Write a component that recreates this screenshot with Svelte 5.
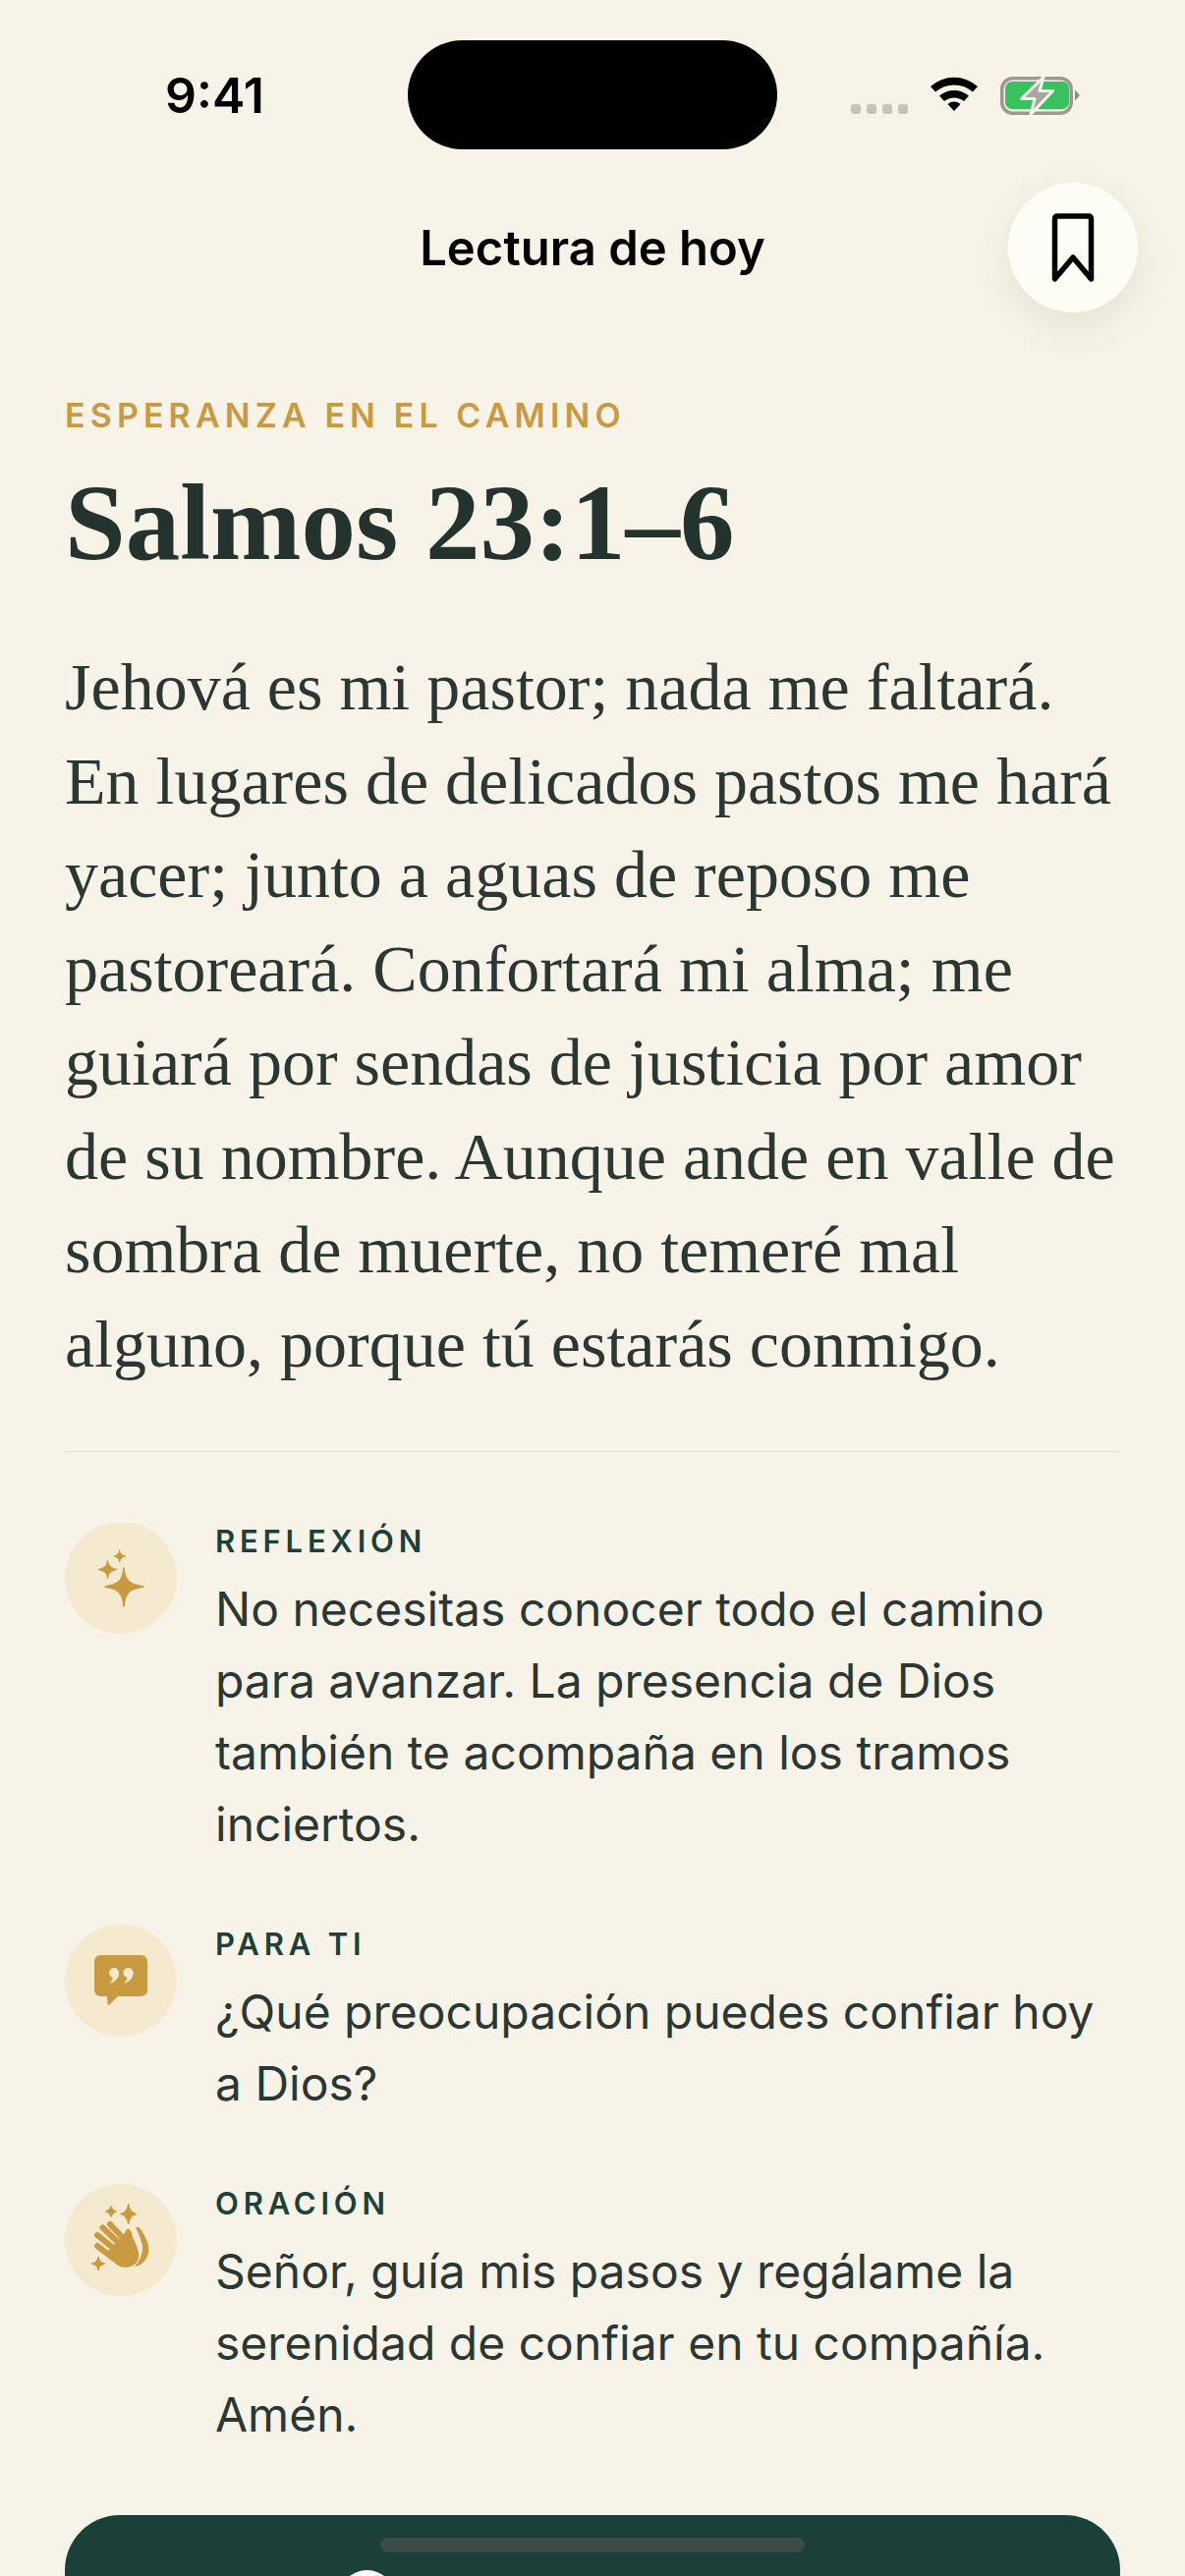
<script lang="ts">
  const verse = [
    "Jehová es mi pastor; nada me faltará.",
    "En lugares de delicados pastos me hará",
    "yacer; junto a aguas de reposo me",
    "pastoreará. Confortará mi alma; me",
    "guiará por sendas de justicia por amor",
    "de su nombre. Aunque ande en valle de",
    "sombra de muerte, no temeré mal",
    "alguno, porque tú estarás conmigo."
  ];

  const notes = [
    {
      key: "sparkle",
      label: "REFLEXIÓN",
      lines: [
        "No necesitas conocer todo el camino",
        "para avanzar. La presencia de Dios",
        "también te acompaña en los tramos",
        "inciertos."
      ]
    },
    {
      key: "quote",
      label: "PARA TI",
      lines: ["¿Qué preocupación puedes confiar hoy", "a Dios?"]
    },
    {
      key: "hands",
      label: "ORACIÓN",
      lines: [
        "Señor, guía mis pasos y regálame la",
        "serenidad de confiar en tu compañía.",
        "Amén."
      ]
    }
  ];
</script>

<div class="screen">
  <div class="status">
    <span class="time">9:41</span>
    <div class="island"></div>
    <div class="status-icons">
      <div class="signal"><i></i><i></i><i></i><i></i></div>
      <svg class="wifi" width="50" height="38" viewBox="0 0 50 38">
        <path d="M1 12 A36 36 0 0 1 49 12 L44 17.5 A29 29 0 0 0 6 17.5Z M10 21.5 A23 23 0 0 1 40 21.5 L35 27 A16 16 0 0 0 15 27Z M18.5 30 A10 10 0 0 1 31.500 30 L25 37Z" fill="#000"/>
      </svg>
      <svg class="battery" width="82" height="40" viewBox="0 0 82 40">
        <rect x="1.750" y="2.750" width="70.500" height="35.500" rx="11" fill="none" stroke="#9a9a92" stroke-width="3.500"/>
        <rect x="5" y="6" width="65" height="28" rx="7" fill="#37c25e"/>
        <path d="M76 14.500 L81 20 L76 25.500Z" fill="#8d8d86"/>
        <path d="M44 1.500 L21.500 23.500 H35 L31 39.500 L53.500 15.500 H40 Z" fill="#a7a69f" stroke="#f7f3e9" stroke-width="3" stroke-linejoin="round"/>
      </svg>
    </div>
  </div>

  <header class="nav">
    <h1>Lectura de hoy</h1>
    <button class="save" aria-label="Guardar">
      <svg width="44" height="72" viewBox="0 0 44 72">
        <path d="M3.500 68 V7 Q3.500 4 6.500 4 H37.500 Q40.500 4 40.500 7 V68 L22 46 Z" fill="none" stroke="#000" stroke-width="5.500" stroke-linejoin="round"/>
      </svg>
    </button>
  </header>

  <main>
    <p class="eyebrow">ESPERANZA EN EL CAMINO</p>
    <h2>Salmos 23:1–6</h2>
    <div class="verse">
      {#each verse as line}
        <div>{line}</div>
      {/each}
    </div>
    <hr />
    <div class="notes">
      {#each notes as note}
        <div class="note">
          <div class="badge">
            {#if note.key === "sparkle"}
              <svg width="114" height="114" viewBox="0 0 114 114">
                <path d="M60 47 C61 60 66 64 80 66 C66 68 61 72 60 86 C59 72 54 68 41 66 C54 64 59 60 60 47Z" fill="#c99a3f" stroke="#c99a3f" stroke-width="1.500" stroke-linejoin="round"/>
                <path d="M43.500 39 C44 45 47 47 53 48.500 C47 50 44 52 43.500 58 C43 52 40 50 34 48.500 C40 47 43 45 43.500 39Z" fill="#c99a3f" stroke="#c99a3f" stroke-linejoin="round"/>
                <path d="M55.700 28.500 C56 32 58 34 62 35 C58 36 56 38 55.700 41.500 C55.400 38 53.400 36 49.500 35 C53.400 34 55.400 32 55.700 28.500Z" fill="#c99a3f" stroke="#c99a3f" stroke-width="0.500" stroke-linejoin="round"/>
              </svg>
            {:else if note.key === "quote"}
              <svg width="114" height="114" viewBox="0 0 114 114">
                <path d="M37 31 H77 Q84 31 84 38 V66 Q84 73 77 73 H54 L46 81 Q44 83.500 43.500 80 L43 73 H37 Q30 73 30 66 V38 Q30 31 37 31Z" fill="#c99a3f"/>
                <circle cx="50" cy="49" r="5" fill="#f5e9cf"/>
                <path d="M55 48 Q56 56 46 60 Q49 56 49 53Z" fill="#f5e9cf"/>
                <circle cx="64.500" cy="49" r="5" fill="#f5e9cf"/>
                <path d="M69.500 48 Q70.500 56 60.500 60 Q63.500 56 63.500 53Z" fill="#f5e9cf"/>
              </svg>
            {:else}
              <svg width="114" height="114" viewBox="0 0 114 114">
                <path d="M64.700 20 Q66 29 73 30.500 Q66 32 64.700 41 Q63.500 32 56.500 30.500 Q63.500 29 64.700 20Z M47 22.500 Q48 27 52.500 28 Q48 29 47 33.500 Q46 29 41.500 28 Q46 27 47 22.500Z M34 74 Q35 80 41 81 Q35 82 34 88 Q33 82 27 81 Q33 80 34 74Z" fill="#c99a3f" stroke="#c99a3f" stroke-linejoin="round"/>
                <path d="M33 63 L50 76 M33 52 L53 68 M38.500 44.500 L57 62 M46 41 L62 58" fill="none" stroke="#c99a3f" stroke-width="6" stroke-linecap="round"/>
                <path d="M44 68 L58 54 L64 45 Q68 47 69 54 Q72 60 74 66 Q78 78 69 83 Q62 87 54 83 Q48 79 44 68Z" fill="#c99a3f"/>
                <path d="M72 44 Q76 43 79 49 Q90 66 82 77 Q78 83 71 84 Q80 74 79 63 Q77 53 72 44Z" fill="#c99a3f"/>
              </svg>
            {/if}
          </div>
          <div class="note-text">
            <div class="label">{note.label}</div>
            {#each note.lines as line}
              <div class="line">{line}</div>
            {/each}
          </div>
        </div>
      {/each}
    </div>
  </main>

  <div class="cta">
    <div class="home"></div>
    <span class="play"></span>
    <span class="cta-label">Escuchar el pasaje</span>
  </div>
</div>

<style>
  :global(body) {
    margin: 0;
    background: #f7f3e9;
  }

  .screen {
    position: relative;
    width: 1206px;
    height: 2622px;
    overflow: hidden;
    background: #f7f3e9;
    font-family: Inter, "Noto Sans", sans-serif;
    color: #25332f;
  }

  .status {
    position: relative;
    height: 186px;
    display: flex;
    justify-content: space-between;
    padding: 0 106px 0 168px;
    box-sizing: border-box;
  }

  .time {
    margin-top: 67px;
    font-size: 50px;
    line-height: 60px;
    font-weight: 600;
    color: #000;
  }

  .island {
    position: absolute;
    left: 415px;
    top: 41px;
    width: 376px;
    height: 111px;
    border-radius: 56px;
    background: #000;
  }

  .status-icons {
    display: flex;
    align-items: flex-start;
    margin-top: 78px;
    gap: 22px;
  }

  .signal {
    display: flex;
    gap: 6px;
    margin-top: 28px;
  }

  .signal i {
    width: 10px;
    height: 10px;
    border-radius: 3px;
    background: #c6c3ba;
  }

  .wifi {
    margin-top: -2px;
  }

  .battery {
    margin-top: -1px;
  }

  .nav {
    position: relative;
    height: 132px;
    display: flex;
    align-items: center;
    justify-content: center;
  }

  h1 {
    margin: 0;
    font-size: 49px;
    font-weight: 600;
    color: #000;
  }

  .save {
    position: absolute;
    right: 48px;
    top: 0;
    width: 132px;
    height: 132px;
    border: 0;
    border-radius: 50%;
    padding: 0;
    display: flex;
    align-items: center;
    justify-content: center;
    background: #fefdf5;
    box-shadow: 0 14px 40px rgba(90, 75, 40, 0.1);
  }

  main {
    padding: 84px 66px 0;
  }

  .eyebrow {
    margin: 0;
    font-size: 34px;
    line-height: 42px;
    font-weight: 600;
    letter-spacing: 5.100px;
    color: #c99a3f;
  }

  h2 {
    margin: 26px 0 0;
    font-family: "Liberation Serif", serif;
    font-size: 111px;
    line-height: 124px;
    font-weight: 700;
    color: #25332f;
  }

  .verse {
    margin-top: 58px;
    font-family: "Liberation Serif", serif;
    font-size: 68px;
    line-height: 95.500px;
    white-space: nowrap;
    color: #2b3733;
  }

  hr {
    margin: 61px 0 0;
    border: 0;
    border-top: 1px solid #e5e1d6;
  }

  .notes {
    margin-top: 71px;
    display: flex;
    flex-direction: column;
    gap: 66px;
  }

  .note {
    display: flex;
    gap: 39px;
  }

  .badge {
    flex: none;
    width: 114px;
    height: 114px;
    border-radius: 50%;
    background: #f5e9cf;
  }

  .label {
    margin: 2px 0 14px;
    font-size: 31px;
    line-height: 36px;
    font-weight: 600;
    letter-spacing: 4.800px;
    color: #1c4237;
  }

  .line {
    font-size: 48px;
    line-height: 73px;
    white-space: nowrap;
    color: #2b3733;
  }

  .cta {
    position: absolute;
    left: 66px;
    right: 66px;
    top: 2560px;
    height: 160px;
    border-radius: 56px;
    background: #1a4037;
    display: flex;
    justify-content: center;
    align-items: flex-start;
    gap: 16px;
    padding: 47px 0 0 10px;
    box-sizing: border-box;
  }

  .home {
    position: absolute;
    left: 321px;
    top: 23px;
    width: 432px;
    height: 15px;
    border-radius: 8px;
    background: #3a4a44;
  }

  .play {
    width: 57px;
    height: 57px;
    margin-top: 9px;
    border-radius: 50%;
    background: #fff;
  }

  .cta-label {
    margin-top: 9px;
    font-size: 50px;
    line-height: 60px;
    font-weight: 600;
    color: #fff;
  }
</style>
